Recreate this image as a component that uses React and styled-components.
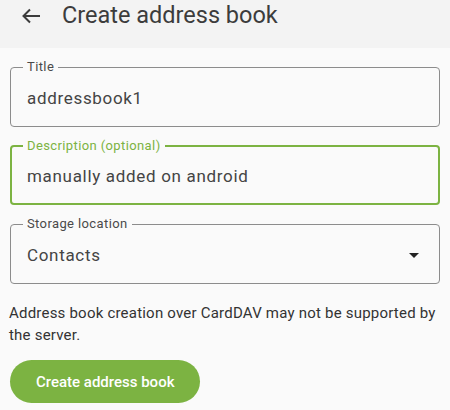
import React from "react";
import styled, { createGlobalStyle } from "styled-components";

const GlobalStyle = createGlobalStyle`
  html, body {
    margin: 0;
    padding: 0;
    background: #fafafa;
    font-family: Roboto, "Noto Sans", sans-serif;
  }
  * {
    box-sizing: border-box;
  }
`;

const Page = styled.div`
  width: 450px;
  min-height: 410px;
  background: #fafafa;
`;

const TopBar = styled.header`
  height: 48px;
  background: #f3f3f3;
  display: flex;
  align-items: flex-start;
  padding: 1px 0 0 21px;
  gap: 21px;
`;

const BackButton = styled.button`
  background: none;
  border: none;
  padding: 0;
  margin-top: 6px;
  width: 20px;
  height: 18px;
  color: #3c3c3c;
  display: flex;
  align-items: center;
  justify-content: center;
  cursor: pointer;
`;

const Title = styled.h1`
  margin: 0;
  font-size: 23.5px;
  line-height: 28px;
  font-weight: 400;
  color: #3c3c3c;
`;

const Form = styled.div`
  display: flex;
  flex-direction: column;
  gap: 12px;
  padding: 12px 10px 0;
`;

const Field = styled.fieldset`
  margin: 0;
  padding: 0 ${(p) => (p.$focused ? 15 : 16)}px;
  border: ${(p) => (p.$focused ? "2px solid #7cb342" : "1px solid #8c8c8c")};
  border-radius: 4px;
  min-width: 0;
`;

const Legend = styled.legend`
  margin-left: -4px;
  padding: 0 4px;
  font-size: 13px;
  line-height: 14px;
  letter-spacing: 0.03em;
  color: ${(p) => (p.$focused ? "#7cb342" : "#4a4a4a")};
`;

const Input = styled.input`
  display: block;
  width: 100%;
  border: none;
  outline: none;
  background: transparent;
  padding: 0;
  margin: ${(p) => (p.$focused ? "11px 0 15px" : "12px 0 16px")};
  height: 24px;
  font-family: Roboto, "Noto Sans", sans-serif;
  font-size: 17px;
  letter-spacing: 0.04em;
  color: #444;
`;

const SelectBox = styled.div`
  display: flex;
  align-items: center;
  justify-content: space-between;
  height: 24px;
  margin: 12px 0 16px;
  font-size: 17px;
  letter-spacing: 0.04em;
  color: #444;
`;

const Caret = styled.svg`
  margin-right: 4px;
`;

const Help = styled.p`
  margin: 18px 10px 0 9px;
  font-size: 15px;
  line-height: 22px;
  letter-spacing: 0.014em;
  color: #333;
`;

const PrimaryButton = styled.button`
  margin: 14px 0 0 10px;
  height: 43px;
  padding: 0 26px;
  border: none;
  border-radius: 22px;
  background: #7cb342;
  color: #fff;
  font-family: Roboto, "Noto Sans", sans-serif;
  font-size: 15px;
  font-weight: 500;
  cursor: pointer;
`;

const TextField = ({ label, value, focused }) => (
  <Field $focused={focused}>
    <Legend $focused={focused}>{label}</Legend>
    <Input $focused={focused} defaultValue={value} readOnly />
  </Field>
);

export default function App() {
  return (
    <Page>
      <GlobalStyle />
      <TopBar>
        <BackButton aria-label="Back">
          <svg width="20" height="16" viewBox="0 0 20 16" fill="none">
            <path
              d="M19 8H2.5M9 1.5L2.5 8L9 14.5"
              stroke="currentColor"
              strokeWidth="2"
            />
          </svg>
        </BackButton>
        <Title>Create address book</Title>
      </TopBar>
      <Form>
        <TextField label="Title" value="addressbook1" />
        <TextField
          label="Description (optional)"
          value="manually added on android"
          focused
        />
        <Field>
          <Legend>Storage location</Legend>
          <SelectBox>
            <span>Contacts</span>
            <Caret width="10" height="5" viewBox="0 0 10 5">
              <path d="M0 0H10L5 5Z" fill="#222" />
            </Caret>
          </SelectBox>
        </Field>
      </Form>
      <Help>
        Address book creation over CardDAV may not be supported by the server.
      </Help>
      <PrimaryButton>Create address book</PrimaryButton>
    </Page>
  );
}
